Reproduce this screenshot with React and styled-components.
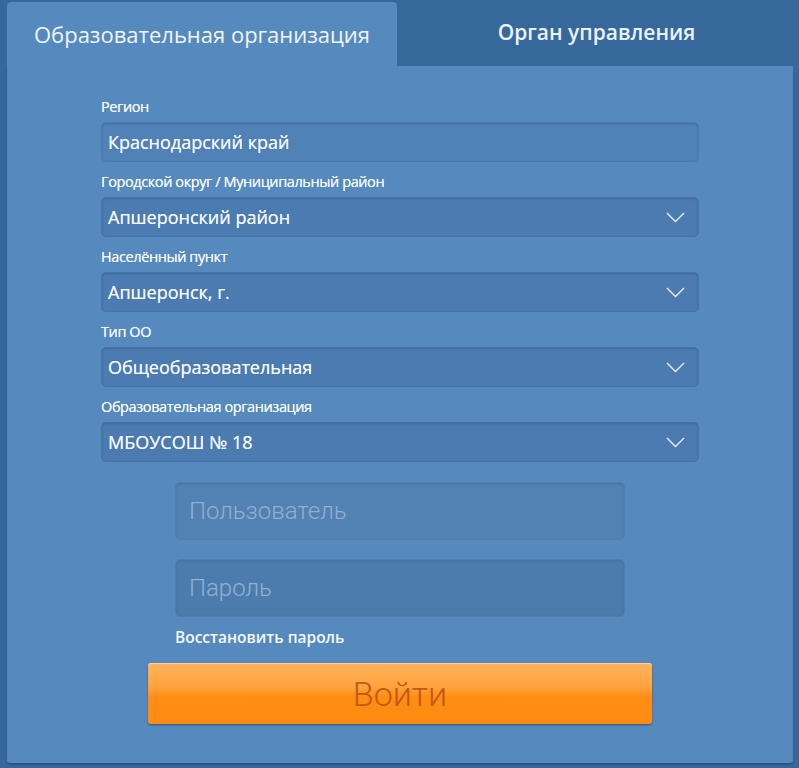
import React from "react";
import styled, { createGlobalStyle } from "styled-components";

const GlobalStyle = createGlobalStyle`
  html, body {
    margin: 0;
    padding: 0;
    background: #36689c;
  }
  * {
    box-sizing: border-box;
  }
`;

const Chevron = () => (
  <svg width="19" height="11" viewBox="0 0 19 11">
    <polyline
      points="1,1 9.5,9.5 18,1"
      fill="none"
      stroke="#e9f0f8"
      strokeWidth="1.4"
    />
  </svg>
);

const App = () => {
  const fields = [
    { label: 'Регион', value: 'Краснодарский край', select: false },
    { label: 'Городской округ / Муниципальный район', value: 'Апшеронский район', select: true },
    { label: 'Населённый пункт', value: 'Апшеронск, г.', select: true },
    { label: 'Тип ОО', value: 'Общеобразовательная', select: true },
    { label: 'Образовательная организация', value: 'МБОУСОШ № 18', select: true },
  ];
  return (
    <Page>
      <GlobalStyle />
      <Tabs>
        <Tab active>Образовательная организация</Tab>
        <Tab>Орган управления</Tab>
      </Tabs>
      <Panel>
        <Form>
          {fields.map((f) => (
            <Group key={f.label}>
              <Label>{f.label}</Label>
              <Field select={f.select}>
                <span>{f.value}</span>
                {f.select && <Chevron />}
              </Field>
            </Group>
          ))}
        </Form>
        <Login>
          <TextInput placeholder="Пользователь" />
          <TextInput placeholder="Пароль" type="password" />
          <Restore>Восстановить пароль</Restore>
        </Login>
        <SubmitButton>Войти</SubmitButton>
      </Panel>
    </Page>
  );
};
export default App;

const Page = styled.div`
  width: 799px;
  height: 768px;
  padding: 2px 6px 5px 7px;
  background: #36689c;
  font-family: "Open Sans", "Liberation Sans", sans-serif;
  display: flex;
  flex-direction: column;
`;

const Tabs = styled.div`
  display: flex;
  height: 64px;
`;

const Tab = styled.div`
  display: flex;
  align-items: center;
  justify-content: center;
  font-size: 22px;
  color: #f1f5fb;
  ${(p) => p.active ? `
    width: 390px;
    background: #5689be;
    border-radius: 4px 4px 0 0;
    font-weight: 400;
  ` : `
    flex: 1;
    margin-left: 3px;
    font-weight: 600;
    font-size: 21px;
    padding-bottom: 4px;
    color: #eaf1f9;
  `}
`;

const Panel = styled.div`
  flex: 1;
  background: #5689be;
  border-radius: 0 0 3px 3px;
  box-shadow: 0 2px 2px rgba(20, 50, 90, 0.4);
  padding-top: 31px;
  display: flex;
  flex-direction: column;
  align-items: center;
`;

const Form = styled.div`
  width: 598px;
  display: flex;
  flex-direction: column;
  gap: 10px;
`;

const Group = styled.div`
  display: flex;
  flex-direction: column;
  gap: 5px;
`;

const Label = styled.div`
  font-size: 14.5px;
  line-height: 20px;
  letter-spacing: -0.4px;
  color: #f4f7fb;
  text-shadow: 0 0 0.4px #f4f7fb;
`;

const Field = styled.div`
  height: 40px;
  border-radius: 5px;
  background: ${(p) => p.select ? '#4b7bb0' : '#5081b7'};
  border: 1px solid ${(p) => p.select ? '#4573a7' : '#4a7aaf'};
  box-shadow: inset 0 1px 2px rgba(30, 60, 100, 0.25);
  display: flex;
  align-items: center;
  justify-content: space-between;
  padding: 0 13px 0 6px;
  font-size: 18px;
  color: #f3f6fb;
  text-shadow: 0 0 0.5px #f3f6fb;
`;

const Login = styled.div`
  width: 450px;
  margin-top: 20px;
  display: flex;
  flex-direction: column;
  gap: 19px;
`;

const TextInput = styled.input`
  height: 58px;
  width: 100%;
  border-radius: 5px;
  border: 1px solid #4f7fb1;
  background: #5182b3;
  box-shadow: inset 0 1px 3px rgba(30, 60, 100, 0.2);
  padding: 0 13px;
  font-family: Roboto, "Liberation Sans", sans-serif;
  font-weight: 300;
  font-size: 24px;
  color: #eef3f9;
  outline: none;
  & + & {
    background: #4c7cae;
  }
  &::placeholder {
    color: #93b0cf;
  }
`;

const Restore = styled.div`
  margin-top: -9px;
  font-size: 15.5px;
  line-height: 20px;
  font-weight: 600;
  color: #f4f8fc;
`;

const SubmitButton = styled.button`
  margin-top: 16px;
  width: 504px;
  height: 61px;
  border: none;
  border-radius: 3px;
  background: linear-gradient(to bottom, #ffb35f 0%, #ffa23c 40%, #ff8e14 55%, #ff8a10 100%);
  box-shadow: 0 1px 2px rgba(20, 40, 70, 0.6), inset 0 1px 0 rgba(255, 220, 170, 0.8);
  font-family: Roboto, "Liberation Sans", sans-serif;
  font-weight: 300;
  font-size: 34px;
  color: #c2581a;
  cursor: pointer;
`;
